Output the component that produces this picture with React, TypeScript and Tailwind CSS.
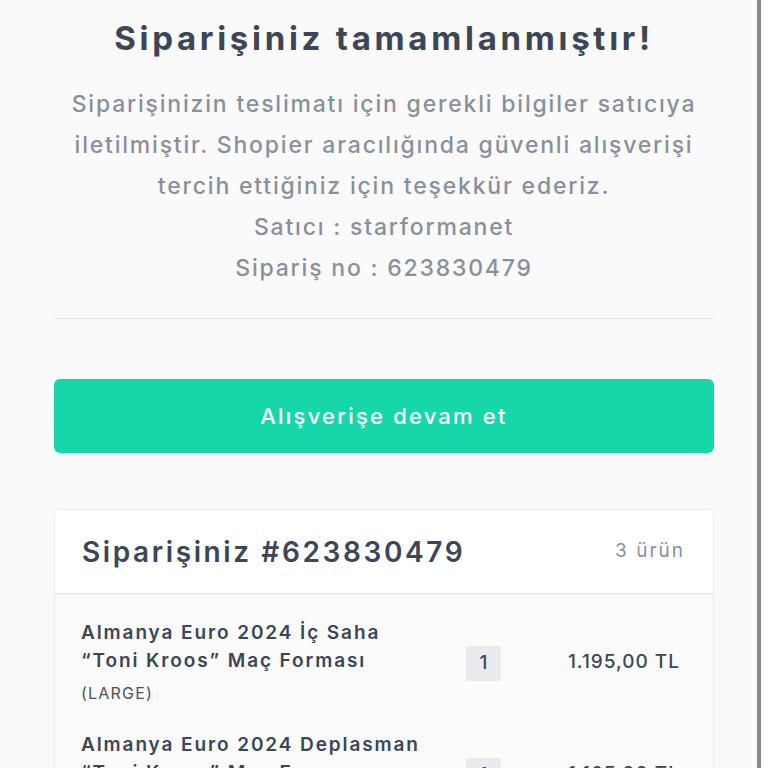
const items = [
  { name: ["Almanya Euro 2024 İç Saha", "“Toni Kroos” Maç Forması"], variant: "(LARGE)", qty: 1, price: "1.195,00 TL" },
  { name: ["Almanya Euro 2024 Deplasman", "“Toni Kroos” Maç Forması"], variant: "(LARGE)", qty: 1, price: "1.165,00 TL" },
];

export default function App() {
  return (
    <div className="flex h-[768px] w-[768px] overflow-hidden bg-white font-['Inter',sans-serif]">
      <div className="flex w-[757px] shrink-0 flex-col bg-[#fafafa] pl-[54px] pr-[43px]">
        <div className="flex shrink-0 flex-col items-center pt-[16px] text-center">
          <h1 className="text-[33px] leading-[44px] font-bold tracking-[3.7px] text-[#3c4656]">
            Siparişiniz tamamlanmıştır!
          </h1>
          <div className="mt-[24px] text-[23px] leading-[41px] font-medium tracking-[1.8px] text-[#8a909b]">
            <p>Siparişinizin teslimatı için gerekli bilgiler satıcıya</p>
            <p>iletilmiştir. Shopier aracılığında güvenli alışverişi</p>
            <p>tercih ettiğiniz için teşekkür ederiz.</p>
            <p>Satıcı : starformanet</p>
            <p>Sipariş no : 623830479</p>
          </div>
        </div>

        <div className="mt-[29px] h-px shrink-0 bg-[#e4e4e4]" />

        <button className="mt-[60px] flex h-[74px] shrink-0 items-center justify-center rounded-[6px] bg-[#16d7a9] text-[22px] font-medium tracking-[2.2px] text-white">
          Alışverişe devam et
        </button>

        <div className="mt-[56px] flex shrink-0 flex-col overflow-hidden rounded-t-[6px] border border-[#ececec] bg-[#fbfbfb]">
          <div className="flex h-[85px] items-center justify-between border-b-2 border-[#ededed] bg-white pl-[27px] pr-[28px]">
            <span className="text-[28px] font-semibold tracking-[2.6px] text-[#3c4656]">Siparişiniz #623830479</span>
            <span className="text-[19px] tracking-[2px] text-[#8a909b]">3 ürün</span>
          </div>
          <div className="flex flex-col gap-[26px] pt-[24px] pl-[26px] pr-[33px]">
            {items.map((it, i) => (
              <div key={i} className="flex items-start">
                <div className="flex w-[385px] flex-col">
                  {it.name.map((l) => (
                    <span key={l} className="text-[19px] leading-[28px] font-semibold tracking-[1.9px] text-[#3c4656]">{l}</span>
                  ))}
                  <span className="mt-[6px] text-[16px] leading-[24px] tracking-[1.2px] text-[#4b5361]">{it.variant}</span>
                </div>
                <div className="mt-[27px] flex h-[35px] w-[35px] items-center justify-center bg-[#e9ebee] text-[19px] font-medium text-[#3c4656]">
                  {it.qty}
                </div>
                <span className="mt-[29px] flex-1 text-right text-[19px] font-medium tracking-[1px] text-[#3c4656]">{it.price}</span>
              </div>
            ))}
          </div>
        </div>
      </div>
      <div className="w-[4px] shrink-0 bg-[#8a8a8a]" />
      <div className="flex-1 bg-white" />
    </div>
  );
}
